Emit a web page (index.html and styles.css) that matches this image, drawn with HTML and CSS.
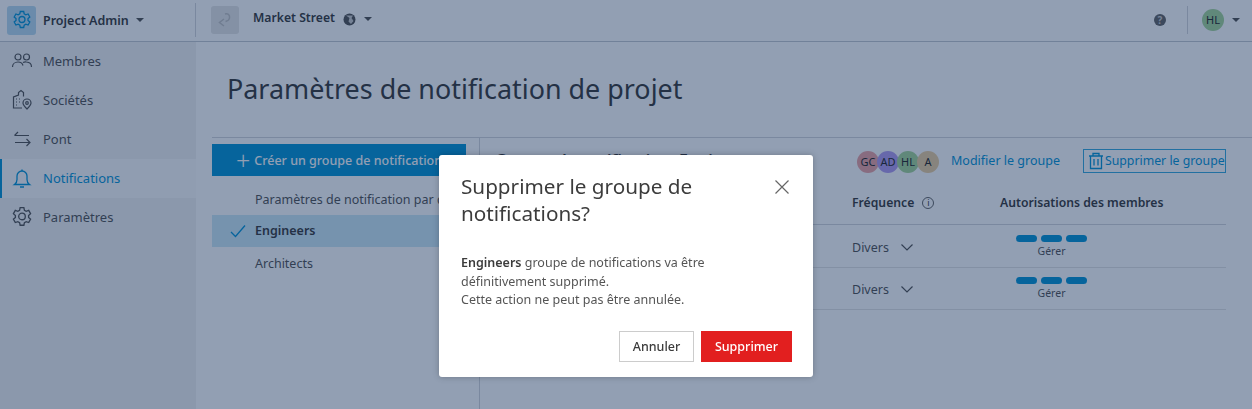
FILE: index.html
```html
<!DOCTYPE html>
<html lang="fr">
<head>
  <meta charset="UTF-8">
  <title>Paramètres de notification de projet</title>
  <link rel="stylesheet" href="styles.css">
</head>
<body>
  <header class="topbar">
    <div class="module">
      <span class="module-icon">
        <svg width="20" height="20" viewBox="0 0 20 20" class="ico-blue"><path d="M8.3 1.5h3.4l.5 2.4 1.6.9 2.3-.8 1.7 3-1.8 1.6v1.8l1.8 1.6-1.7 3-2.3-.8-1.6.9-.5 2.4H8.3l-.5-2.4-1.6-.9-2.3.8-1.7-3 1.800-1.600V8.600L2.200 7l1.700-3 2.300.8 1.600-.9z"/><circle cx="10" cy="9.500" r="3"/></svg>
      </span>
      <b class="module-name">Project Admin</b>
      <span class="caret"></span>
    </div>
    <div class="project">
      <span class="project-thumb">
        <svg width="14" height="16" viewBox="0 0 14 16" class="ico-thumb"><path d="M6 7 1.500 10.500 6 14"/><path d="M7 2c3-1 5 1 4.500 4S9 9 7.500 9.500"/></svg>
      </span>
      <b class="project-name">Market Street</b>
      <svg width="13" height="13" viewBox="0 0 13 13" class="globe"><circle cx="6.500" cy="6.500" r="6" fill="#555"/><path d="M3 2.500 6.500 5 5.500 8.500 8 11 10.500 8l-2-3 1.500-2.500" fill="#ccc"/></svg>
      <span class="caret"></span>
    </div>
    <div class="top-right">
      <span class="help">?</span>
      <span class="top-sep"></span>
      <span class="avatar av-green">HL</span>
      <span class="caret"></span>
    </div>
  </header>

  <div class="layout">
    <nav class="sidebar">
      <a class="nav-item">
        <svg width="22" height="22" viewBox="0 0 22 22" class="ico"><circle cx="7" cy="7" r="3"/><circle cx="15.500" cy="7" r="3"/><path d="M1.500 17c0-3 2.500-5 5.500-5 2.500 0 4.500 1.500 5 3.500"/><path d="M12 12.500c1-.5 2.200-.7 3.500-.5 3 .2 5 2.300 5 5"/></svg>
        Membres
      </a>
      <a class="nav-item">
        <svg width="22" height="22" viewBox="0 0 22 22" class="ico"><path d="M11 19H2.500V8L7.500 6V3.500L10 1.500l2.500 2v4"/><path d="M5 10h1M8 10h1M5 13h1M8 13h1M5 16h1"/><path d="M16 20c-2.500-2.500-4-4-4-6a4 4 0 0 1 8 0c0 2-1.500 3.500-4 6z"/><circle cx="16" cy="14" r="1.300"/></svg>
        Sociétés
      </a>
      <a class="nav-item">
        <svg width="22" height="22" viewBox="0 0 22 22" class="ico"><path d="M18 7.500H3.500M7 4 3.500 7.500"/><path d="M4 14.500h15M15.500 11l3.500 3.500-3.500 3.500"/></svg>
        Pont
      </a>
      <a class="nav-item active">
        <svg width="22" height="22" viewBox="0 0 22 22" class="ico-blue"><path d="M3.500 17.500c1.500-1 2.500-2 2.500-5V9a5 5 0 0 1 10 0v3.500c0 3 1 4 2.500 5z"/><path d="M11 4V2.500M9 20h4"/></svg>
        Notifications
      </a>
      <a class="nav-item">
        <svg width="22" height="22" viewBox="0 0 20 20" class="ico"><path d="M8.300 1.500h3.400l.5 2.400 1.600.9 2.300-.8 1.700 3-1.800 1.600v1.800l1.800 1.600-1.700 3-2.300-.8-1.600.9-.5 2.400H8.300l-.5-2.400-1.600-.9-2.300.8-1.700-3 1.800-1.600V8.600L2.200 7l1.700-3 2.300.8 1.600-.9z"/><circle cx="10" cy="9.500" r="3"/></svg>
        Paramètres
      </a>
    </nav>

    <main class="content">
      <h1>Paramètres de notification de projet</h1>
      <div class="columns">
        <section class="groups">
          <button class="btn-create"><span class="plus">+</span>Créer un groupe de notification</button>
          <ul class="group-list">
            <li>Paramètres de notification par défaut</li>
            <li class="selected">
              <svg width="16" height="14" viewBox="0 0 16 14" class="ico-blue"><path d="M1 8l4.500 4.500L15 1.500"/></svg>
              Engineers
            </li>
            <li>Architects</li>
          </ul>
        </section>
        <section class="detail">
          <div class="detail-head">
            <h2>Groupe de notification: Engineers</h2>
            <div class="members">
              <span class="avatar av-red">GC</span>
              <span class="avatar av-purple">AD</span>
              <span class="avatar av-green">HL</span>
              <span class="avatar av-tan">A</span>
            </div>
            <a class="link">Modifier le groupe</a>
            <a class="link link-delete">
              <svg width="16" height="18" viewBox="0 0 16 18" class="ico-blue"><path d="M1 4h14M5 4V1.500h6V4M2.500 4v12.500h11V4M6 7v6.500M10 7v6.500"/></svg>
              Supprimer le groupe
            </a>
          </div>
          <div class="table-row table-head">
            <span class="col-freq">Fréquence <i class="info">i</i></span>
            <span class="col-perm">Autorisations des membres</span>
          </div>
          <div class="table-row">
            <span class="col-freq">Divers
              <svg width="12" height="7" viewBox="0 0 12 7" class="ico"><path d="M.5.500 6 6 11.500.5"/></svg>
            </span>
            <span class="col-perm">
              <span class="pills"><i></i><i></i><i></i></span>
              <small>Gérer</small>
            </span>
          </div>
          <div class="table-row">
            <span class="col-freq">Divers
              <svg width="12" height="7" viewBox="0 0 12 7" class="ico"><path d="M.5.500 6 6 11.500.5"/></svg>
            </span>
            <span class="col-perm">
              <span class="pills"><i></i><i></i><i></i></span>
              <small>Gérer</small>
            </span>
          </div>
        </section>
      </div>
    </main>
  </div>

  <div class="overlay">
    <div class="modal">
      <div class="modal-head">
        <h3>Supprimer le groupe de notifications?</h3>
        <svg width="14" height="14" viewBox="0 0 14 14" class="modal-close"><path d="M.5.500l13 13M13.500.5l-13 13"/></svg>
      </div>
      <p class="modal-text"><b>Engineers</b> groupe de notifications va être définitivement supprimé.<br>Cette action ne peut pas être annulée.</p>
      <div class="modal-actions">
        <button class="btn-cancel">Annuler</button>
        <button class="btn-danger">Supprimer</button>
      </div>
    </div>
  </div>
</body>
</html>
```

FILE: styles.css
```css
* {
  box-sizing: border-box;
}

body {
  margin: 0;
  height: 409px;
  overflow: hidden;
  font-family: "Noto Sans", Arial, sans-serif;
  font-size: 13px;
  color: #3c3c3c;
  background: #fff;
}

svg {
  flex: none;
  fill: none;
}

.ico path, .ico circle {
  stroke: #555;
  stroke-width: 1.2;
}

.ico-blue path, .ico-blue circle {
  stroke: #0696d7;
  stroke-width: 1.3;
}

.ico-thumb path {
  stroke: #c2c2c2;
  stroke-width: 1.5;
}

/* top bar */
.topbar {
  display: flex;
  height: 42px;
  padding-bottom: 1px;
  border-bottom: 1px solid #c4c9d0;
  align-items: center;
}

.module {
  width: 196px;
  height: 34px;
  display: flex;
  align-items: center;
  padding-left: 7px;
  border-right: 1px solid #d4d7dc;
}

.module-icon {
  width: 29px;
  height: 29px;
  border-radius: 3px;
  background: #b9dcf0;
  display: flex;
  align-items: center;
  justify-content: center;
  margin-right: 7px;
}

.module-name, .project-name {
  font-weight: 600;
  font-size: 12.5px;
  color: #3c3c3c;
}

.caret {
  width: 0;
  height: 0;
  border-left: 4px solid transparent;
  border-right: 4px solid transparent;
  border-top: 4px solid #555;
  margin-left: 7px;
}

.project {
  display: flex;
  align-items: center;
  padding-left: 15px;
  flex: 1;
}

.project-thumb {
  width: 28px;
  height: 28px;
  border-radius: 3px;
  background: #e6e6e6;
  display: flex;
  align-items: center;
  justify-content: center;
  margin-right: 14px;
}

.project-name {
  font-size: 12.2px;
  margin-bottom: 5px;
  margin-right: 8px;
}

.globe {
  margin-bottom: 2px;
  margin-right: 1px;
}

.project .caret {
  margin-bottom: 2px;
}

.top-right {
  display: flex;
  align-items: center;
  padding-right: 12px;
}

.help {
  width: 12px;
  height: 12px;
  border-radius: 50%;
  background: #666;
  color: #ccc;
  font-size: 10px;
  font-weight: 700;
  line-height: 12px;
  text-align: center;
}

.top-sep {
  width: 1px;
  height: 28px;
  background: #d4d7dc;
  margin: 0 14px 0 21px;
}

.top-right .caret {
  margin-left: 8px;
}

.avatar {
  width: 22px;
  height: 22px;
  border-radius: 50%;
  font-size: 11px;
  line-height: 22px;
  text-align: center;
  color: #2a2a2a;
  display: inline-block;
  flex: none;
}

.av-green { background: #a6d69a; }
.av-red { background: #eda5a5; }
.av-purple { background: #b39ef0; }
.av-tan { background: #eccfa0; }

/* sidebar */
.layout {
  display: flex;
  height: 367px;
}

.sidebar {
  width: 196px;
  background: #f3f3f3;
}

.nav-item {
  height: 39px;
  display: flex;
  align-items: center;
  gap: 10px;
  padding-left: 11px;
  padding-bottom: 2px;
  font-size: 13px;
  color: #555;
}

.nav-item.active {
  background: #fbfbfb;
  color: #0696d7;
  border-left: 2px solid #0696d7;
  padding-left: 9px;
}

/* content */
.content {
  flex: 1;
  padding-left: 16px;
  min-width: 0;
}

h1 {
  margin: 0;
  padding: 28px 0 0 15px;
  height: 95px;
  font-size: 26.9px;
  font-weight: 400;
  color: #3c3c3c;
}

.columns {
  display: flex;
  border-top: 1px solid #d4d7dc;
  height: 272px;
}

.groups {
  width: 268px;
  padding-top: 6px;
  border-right: 1px solid #d4d7dc;
  flex: none;
  overflow: hidden;
}

.btn-create {
  width: 254px;
  height: 32px;
  border: none;
  background: #0696d7;
  color: #fff;
  font-family: inherit;
  font-size: 12.5px;
  font-weight: 500;
  display: flex;
  align-items: center;
  padding: 0 0 0 24px;
  white-space: nowrap;
  overflow: hidden;
}

.plus {
  font-size: 25px;
  font-weight: 300;
  line-height: 20px;
  margin-right: 4px;
}

.group-list {
  list-style: none;
  margin: 7px 0 0;
  padding: 0;
  width: 268px;
}

.group-list li {
  height: 32px;
  line-height: 34px;
  padding-left: 43px;
  font-size: 12.5px;
  color: #555;
  white-space: nowrap;
  overflow: hidden;
}

.group-list .selected {
  background: #cde9f7;
  font-weight: 600;
  color: #3c3c3c;
  display: flex;
  align-items: center;
  gap: 9px;
  padding-left: 18px;
}

.detail {
  flex: 1;
  padding-left: 15px;
  padding-right: 26px;
  min-width: 0;
}

.detail-head {
  display: flex;
  align-items: center;
  height: 45px;
  white-space: nowrap;
}

h2 {
  margin: 0 0 2px;
  width: 362px;
  flex: none;
  font-size: 16px;
  font-weight: 600;
  color: #3c3c3c;
  overflow: hidden;
}

.members {
  display: flex;
  width: 94px;
  flex: none;
  margin-top: 2px;
}

.members .avatar {
  margin-right: -2px;
}

.link {
  color: #0696d7;
  font-size: 12.5px;
}

.link-delete {
  display: flex;
  align-items: center;
  gap: 1px;
  margin-left: 23px;
  padding-left: 4px;
  height: 24px;
  font-size: 12.3px;
  border: 1px solid #38abdf;
}

.table-row {
  display: flex;
  height: 42.500px;
  align-items: center;
  border-bottom: 1px solid #e4e4e4;
  padding-left: 357px;
  padding-top: 1px;
  font-size: 12.5px;
  color: #555;
}

.table-head {
  height: 42px;
  padding-top: 0;
  padding-bottom: 2px;
  font-size: 12.2px;
  font-weight: 600;
  color: #3c3c3c;
  border-bottom: 1px solid #d4d7dc;
}

.col-freq {
  width: 148px;
  flex: none;
  display: flex;
  align-items: center;
  gap: 12px;
}

.table-head .col-freq {
  gap: 8px;
}

.col-perm {
  display: flex;
  flex-direction: column;
  align-items: flex-start;
  white-space: nowrap;
}

.table-row .col-perm {
  padding-left: 16px;
}

.table-head.table-row .col-perm {
  padding-left: 0;
}

.table-row:not(.table-head) .col-freq {
  padding-top: 2px;
}

.info {
  width: 12px;
  height: 12px;
  border: 1px solid #666;
  border-radius: 50%;
  font-size: 9px;
  font-style: normal;
  font-weight: 400;
  line-height: 10px;
  text-align: center;
}

.pills {
  display: flex;
  gap: 4px;
}

.pills i {
  width: 21px;
  height: 7px;
  border-radius: 4px;
  background: #0696d7;
}

.col-perm small {
  font-size: 10.5px;
  align-self: center;
  line-height: 14px;
  margin-top: 2px;
}

/* dialog */
.overlay {
  position: fixed;
  inset: 0;
  background: rgba(6, 37, 82, .44);
  display: flex;
  justify-content: center;
  align-items: flex-start;
  padding-top: 155px;
}

.modal {
  width: 374px;
  height: 222px;
  background: #fff;
  border-radius: 3px;
  box-shadow: 0 0 6px rgba(0, 0, 0, .25);
  padding: 18px 21px 0 22px;
}

.modal-head {
  display: flex;
  justify-content: space-between;
  align-items: flex-start;
}

h3 {
  margin: 0;
  width: 270px;
  font-size: 20.7px;
  line-height: 27px;
  font-weight: 400;
  color: #3c3c3c;
}

.modal-close {
  margin-top: 7px;
  margin-right: 3px;
}

.modal-close path {
  stroke: #666;
  stroke-width: 1.2;
}

.modal-text {
  margin: 27px 0 0;
  width: 270px;
  font-size: 12.5px;
  line-height: 18.5px;
  color: #555;
}

.modal-text b {
  font-weight: 600;
  color: #3c3c3c;
}

.modal-actions {
  display: flex;
  justify-content: flex-end;
  gap: 7px;
  margin-top: 21px;
}

.modal-actions button {
  height: 31px;
  font-family: inherit;
  font-size: 12.5px;
  font-weight: 500;
}

.btn-cancel {
  width: 75px;
  background: #fff;
  border: 1px solid #ccc;
  color: #3c3c3c;
}

.btn-danger {
  width: 91px;
  background: #e21f1f;
  border: none;
  color: #fff;
}
```
